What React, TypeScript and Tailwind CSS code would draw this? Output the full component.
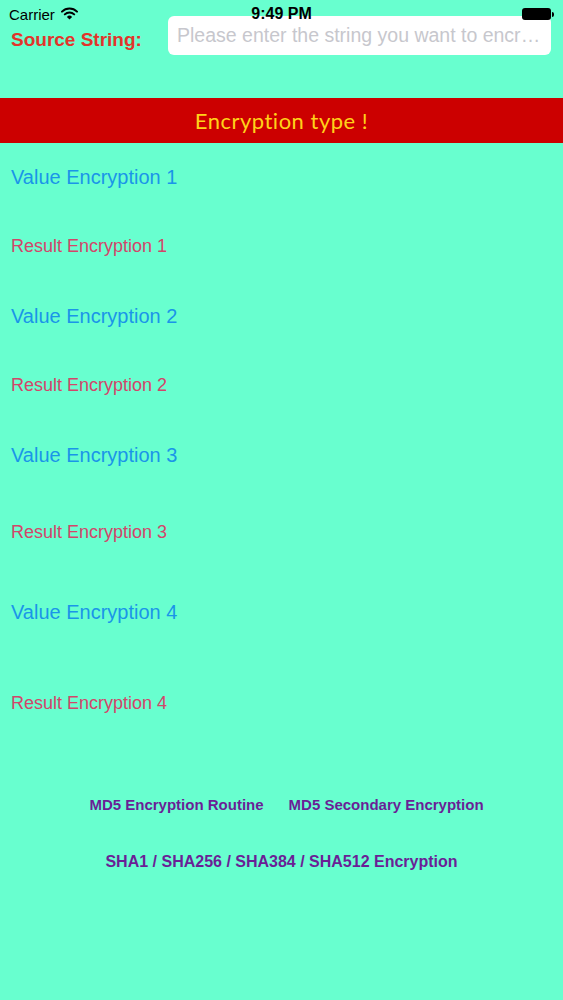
import React from "react";

const ROWS = [
  { label: "Value Encryption 1", kind: "value", h: "h-[68px]" },
  { label: "Result Encryption 1", kind: "result", h: "h-[70px]" },
  { label: "Value Encryption 2", kind: "value", h: "h-[70px]" },
  { label: "Result Encryption 2", kind: "result", h: "h-[68px]" },
  { label: "Value Encryption 3", kind: "value", h: "h-[72px]" },
  { label: "Result Encryption 3", kind: "result", h: "h-[82px]" },
  { label: "Value Encryption 4", kind: "value", h: "h-[78px]" },
  { label: "Result Encryption 4", kind: "result", h: "h-[104px]" },
];

function StatusBar() {
  return (
    <div className="pointer-events-none absolute inset-x-0 top-0 z-10 flex h-[28px] items-center px-[9px] text-black">
      <div className="flex flex-1 items-center gap-[6px]">
        <span className="text-[15px] leading-none">Carrier</span>
        <svg width="17" height="13" viewBox="0 0 17 13" className="mt-[-2px]">
          <path d="M1 4.6a10.6 10.6 0 0 1 15 0" stroke="black" strokeWidth="2" fill="none" strokeLinecap="round" />
          <path d="M3.8 7.4a6.6 6.6 0 0 1 9.4 0" stroke="black" strokeWidth="2" fill="none" strokeLinecap="round" />
          <path d="M8.5 12.5 L5.9 9.9 a3.7 3.7 0 0 1 5.2 0 Z" fill="black" />
        </svg>
      </div>
      <span className="absolute left-1/2 -translate-x-1/2 text-[16px] font-bold leading-none">9:49 PM</span>
      <div className="flex items-center">
        <div className="h-[12px] w-[29px] rounded-[3px] bg-black" />
        <div className="ml-[1px] h-[5px] w-[2px] rounded-r-sm bg-black" />
      </div>
    </div>
  );
}

export default function App() {
  return (
    <div className="relative h-[1000px] w-full overflow-hidden bg-[#68ffcf] font-['Liberation_Sans',Arial,sans-serif]">
      <StatusBar />

      {/* Source input */}
      <div className="flex items-center pt-[16px]">
        <span className="w-[168px] shrink-0 pl-[11px] pt-[9px] text-[19px] font-bold text-[#e2342b]">
          Source String:
        </span>
        <input
          placeholder="Please enter the string you want to encrypt"
          className="h-[39px] w-[383px] rounded-[6px] bg-white px-[9px] text-[19.5px] text-ellipsis outline-none placeholder:text-[#c7c7cd]"
        />
      </div>

      {/* Header bar */}
      <div className="mt-[43px] flex h-[45px] items-center justify-center bg-[#cc0000]">
        <span className="font-['Lato','Noto_Sans',sans-serif] text-[22px] tracking-[0.5px] text-[#ffd21a]">
          Encryption type !
        </span>
      </div>

      <div className="flex flex-col">
        {ROWS.map((r) => (
          <div key={r.label} className={`flex items-center pl-[11px] ${r.h}`}>
            {r.kind === "value" ? (
              <span className="text-[20px] text-[#1a95e8]">{r.label}</span>
            ) : (
              <span className="text-[18px] text-[#d3456a]">{r.label}</span>
            )}
          </div>
        ))}
      </div>

      {/* Actions */}
      <div className="mt-[42px] flex flex-col items-center gap-[42px] font-bold leading-none text-[#6a1f96]">
        <div className="ml-[10px] flex gap-[25px] text-[15px]">
          <button type="button">MD5 Encryption Routine</button>
          <button type="button">MD5 Secondary Encryption</button>
        </div>
        <button type="button" className="text-[16px]">SHA1 / SHA256 / SHA384 / SHA512 Encryption</button>
      </div>
    </div>
  );
}
